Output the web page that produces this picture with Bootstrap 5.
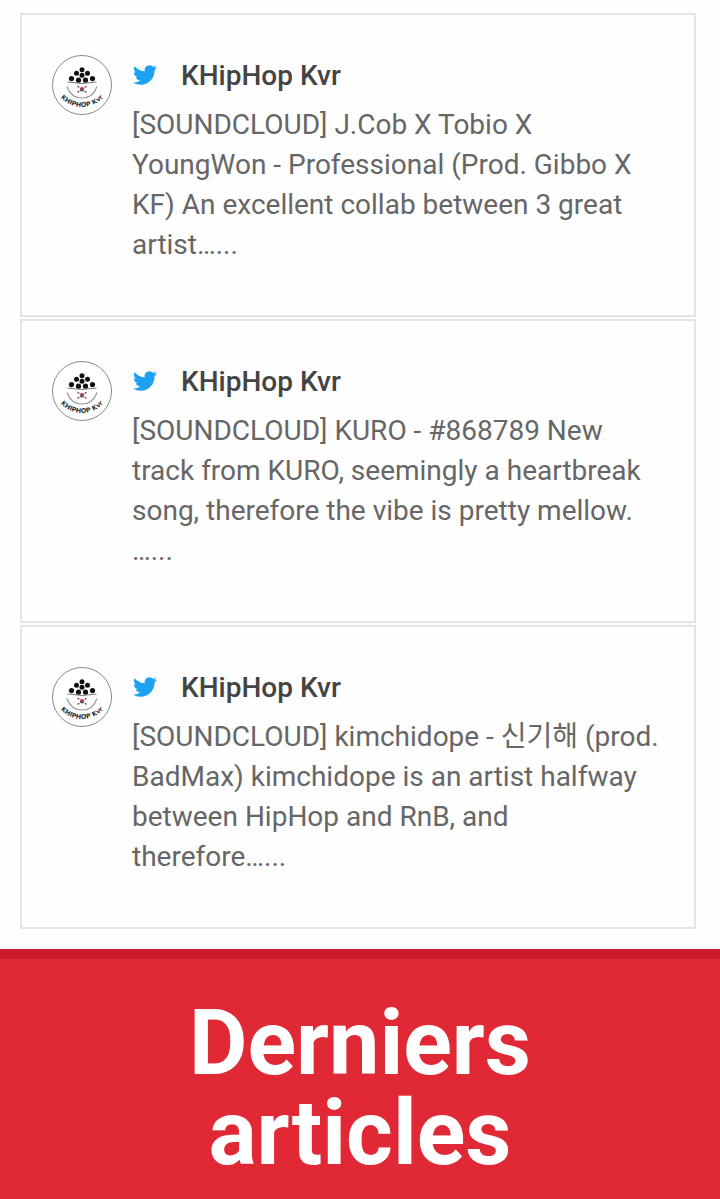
<!DOCTYPE html>
<html lang="fr">
<head>
<meta charset="utf-8">
<meta name="viewport" content="width=device-width, initial-scale=1">
<title>KHipHop Kvr</title>
<link href="https://cdn.jsdelivr.net/npm/bootstrap@5.3.0/dist/css/bootstrap.min.css" rel="stylesheet">
<style>
  body { font-family: Roboto, "Noto Sans CJK KR", sans-serif; background: #fefefe; }
  .feed { display: grid; gap: 2px; padding: 13px 24px 20px 20px; }
  .post { --bs-card-border-width: 2px; --bs-card-border-color: #e4e4e4; --bs-card-border-radius: 0; --bs-card-bg: #fefefe; padding: 40px 30px 50px; }
  .post-row { gap: 20px; }
  .avatar { width: 60px; height: 60px; }
  .bird { width: 26px; height: 24px; margin-bottom: 2px; }
  .author { gap: 23px; margin-bottom: 8px; font-size: 28px; line-height: 42px; font-weight: 500; }
  .author a { color: #444; }
  .message { font-size: 28px; line-height: 40px; color: #666; }
  .latest { background: #e02934; border-top: 10px solid #c91b2b; padding: 40px 150px; }
  .latest-title { font-size: 90px; line-height: 90px; font-weight: 700; }
</style>
</head>
<body>
<svg class="d-none" aria-hidden="true">
  <symbol id="twitter" viewBox="0 0 24 24">
    <path fill="#1da1f2" d="M23.953 4.57a10 10 0 01-2.825.775 4.958 4.958 0 002.163-2.723c-.951.555-2.005.959-3.127 1.184a4.92 4.92 0 00-8.384 4.482C7.69 8.095 4.067 6.13 1.64 3.162a4.822 4.822 0 00-.666 2.475c0 1.71.87 3.213 2.188 4.096a4.904 4.904 0 01-2.228-.616v.06a4.923 4.923 0 003.946 4.827 4.996 4.996 0 01-2.212.085 4.936 4.936 0 004.604 3.417 9.867 9.867 0 01-6.102 2.105c-.39 0-.779-.023-1.17-.067a13.995 13.995 0 007.557 2.209c9.053 0 13.998-7.496 13.998-13.985 0-.21 0-.42-.015-.63A9.935 9.935 0 0024 4.59z"/>
  </symbol>
  <symbol id="logo" viewBox="0 0 60 60">
    <circle cx="30" cy="30" r="29.5" fill="#fff" stroke="#888" stroke-width="1"/>
    <g fill="#111">
      <circle cx="30" cy="14.700" r="2.5"/>
      <circle cx="24.500" cy="18.300" r="2.5"/><circle cx="35.500" cy="18.300" r="2.5"/><circle cx="30" cy="20.300" r="2.5"/>
      <circle cx="19.500" cy="23.600" r="2.6"/><circle cx="26.500" cy="25.200" r="2.6"/><circle cx="33.500" cy="25.200" r="2.6"/><circle cx="40.500" cy="23.600" r="2.6"/>
    </g>
    <g fill="none" stroke="#777">
      <path d="M15.500 27Q30 30 44.500 27" stroke-width="1"/>
      <path d="M15 31.500Q19 43 30 43T45 31.500" stroke-width="1.200" stroke="#999"/>
      <path d="M25.500 31l1.800 1.500M34.500 31l-1.800 1.500M25.500 37.500l1.800-1.500M34.500 37.500l-1.800-1.500" stroke="#844" stroke-width="1.200"/>
    </g>
    <path d="M27.800 34.300a2.200 2.200 0 0 1 4.400 0z" fill="#c33"/>
    <path d="M27.800 34.300a2.200 2.200 0 0 0 4.400 0z" fill="#445"/>
    <path id="arc" d="M6 39.500Q16 52 30 52T54 39.500" fill="none"/>
    <text font-family="DejaVu Sans, sans-serif" font-weight="700" font-size="6.500" fill="#333"><textPath href="#arc" startOffset="50%" text-anchor="middle">KHIPHOP Kvr</textPath></text>
  </symbol>
</svg>

<main class="feed">
  <article class="card post">
    <div class="d-flex post-row">
      <svg class="avatar flex-shrink-0" role="img" aria-label="KHipHop Kvr"><use href="#logo"/></svg>
      <div class="flex-grow-1">
        <div class="author d-flex align-items-center">
          <svg class="bird" aria-hidden="true"><use href="#twitter"/></svg>
          <a class="text-decoration-none" href="#">KHipHop Kvr</a>
        </div>
        <p class="message mb-0">[SOUNDCLOUD] J.Cob X Tobio X YoungWon - Professional (Prod. Gibbo X KF) An excellent collab between 3 great artist…...</p>
      </div>
    </div>
  </article>
  <article class="card post">
    <div class="d-flex post-row">
      <svg class="avatar flex-shrink-0" role="img" aria-label="KHipHop Kvr"><use href="#logo"/></svg>
      <div class="flex-grow-1">
        <div class="author d-flex align-items-center">
          <svg class="bird" aria-hidden="true"><use href="#twitter"/></svg>
          <a class="text-decoration-none" href="#">KHipHop Kvr</a>
        </div>
        <p class="message mb-0">[SOUNDCLOUD] KURO - #868789 New track from KURO, seemingly a heartbreak song, therefore the vibe is pretty mellow. …...</p>
      </div>
    </div>
  </article>
  <article class="card post">
    <div class="d-flex post-row">
      <svg class="avatar flex-shrink-0" role="img" aria-label="KHipHop Kvr"><use href="#logo"/></svg>
      <div class="flex-grow-1">
        <div class="author d-flex align-items-center">
          <svg class="bird" aria-hidden="true"><use href="#twitter"/></svg>
          <a class="text-decoration-none" href="#">KHipHop Kvr</a>
        </div>
        <p class="message mb-0">[SOUNDCLOUD] kimchidope - 신기해 (prod. BadMax) kimchidope is an artist halfway between HipHop and RnB, and therefore…...</p>
      </div>
    </div>
  </article>
</main>

<section class="latest">
  <h2 class="latest-title text-white text-center mb-0">Derniers articles</h2>
</section>
<script src="https://cdn.jsdelivr.net/npm/bootstrap@5.3.0/dist/js/bootstrap.bundle.min.js"></script>
</body>
</html>
